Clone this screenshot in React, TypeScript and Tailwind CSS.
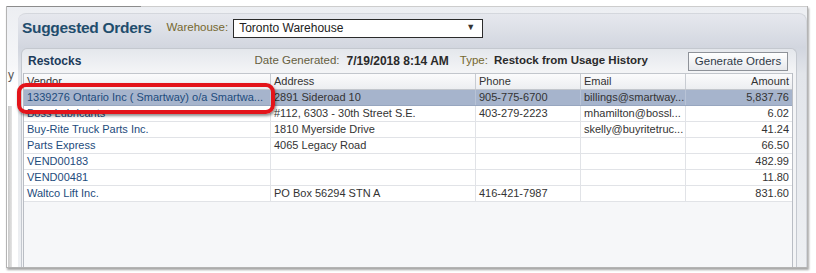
import React from "react";

type Row = {
    vendor: string;
    address: string;
    phone: string;
    email: string;
    amount: string;
    selected?: boolean;
};

const rows: Row[] = [
    { vendor: "1339276 Ontario Inc ( Smartway) o/a Smartwa...", address: "2891 Sideroad 10", phone: "905-775-6700", email: "billings@smartway...", amount: "5,837.76", selected: true },
    { vendor: "Boss Lubricants", address: "#112, 6303 - 30th Street S.E.", phone: "403-279-2223", email: "mhamilton@bossl...", amount: "6.02" },
    { vendor: "Buy-Rite Truck Parts Inc.", address: "1810 Myerside Drive", phone: "", email: "skelly@buyritetruc...", amount: "41.24" },
    { vendor: "Parts Express", address: "4065 Legacy Road", phone: "", email: "", amount: "66.50" },
    { vendor: "VEND00183", address: "", phone: "", email: "", amount: "482.99" },
    { vendor: "VEND00481", address: "", phone: "", email: "", amount: "11.80" },
    { vendor: "Waltco Lift Inc.", address: "PO Box 56294 STN A", phone: "416-421-7987", email: "", amount: "831.60" },
];

const cols = "grid grid-cols-[247px_205px_105px_105px_106px]";

export default function App() {
    return (
        <div className="relative w-[816px] h-[273px] bg-white overflow-hidden font-['Liberation_Sans',Arial,sans-serif]">
            {/* screenshot frame */}
            <div className="ml-[6px] mt-[6px] w-[802px] h-[262px] flex flex-col border-l border-r border-b border-[#b4b4b4] shadow-[1px_2px_2px_rgba(0,0,0,0.35)] bg-[linear-gradient(to_bottom,#eceef2_0px,#f6f7f9_60px,#ffffff_80px)]">
                <div className="h-px bg-[linear-gradient(to_right,#8c8c8c_134px,#cdcdcd_134px)]" />
                <div className="flex flex-1 min-h-0">
                    {/* left gutter */}
                    <div className="w-[13px] flex flex-col">
                        <div className="mt-[61px] ml-[1px] text-[12px] leading-[14px] text-[#555]">y</div>
                        <div className="mt-[24px] ml-[1px] w-[4px] flex-1 bg-[linear-gradient(to_right,#c9c9c9,#e4e4e4)]" />
                    </div>

                    {/* outer panel */}
                    <div className="flex-1 mt-[6px] flex flex-col rounded-t-[8px] border-t border-r border-[#d4d7dd] bg-[linear-gradient(to_bottom,#e6e8ee_0px,#d2d6df_34px,#e2e5ea_60px,#eef0f3_100%)]">
                        <div className="h-[28px] flex items-center pl-[4px]">
                            <span className="text-[15.5px] font-bold tracking-[-0.3px] text-[#1f4d6d]">Suggested Orders</span>
                            <span className="ml-[15px] text-[11.5px] text-[#76682f]">Warehouse:</span>
                            <div className="ml-[5px] w-[250px] h-[19px] flex items-center justify-between border border-[#2b2b2b] bg-white pl-[5px] pr-[7px]">
                                <span className="text-[12px] text-[#222]">Toronto Warehouse</span>
                                <span className="text-[9px] text-[#333]">▼</span>
                            </div>
                        </div>

                        {/* inner panel */}
                        <div className="mt-[6px] ml-[3px] mr-[9px] flex-1 flex flex-col rounded-t-[6px] border-l border-t border-r border-[#c4c8cf] bg-[linear-gradient(to_bottom,#e4e7ec,#f3f4f6_22px)]">
                            <div className="h-[24px] flex items-center pl-[6px] pr-[8px]">
                                <span className="text-[12px] font-bold text-[#1c3b5a]">Restocks</span>
                                <span className="ml-auto text-[11.5px] text-[#66603f]">Date Generated:</span>
                                <span className="ml-[7px] text-[12px] font-bold text-[#2a2a2a]">7/19/2018 8:14 AM</span>
                                <span className="ml-[11px] text-[11.5px] text-[#76682f]">Type:</span>
                                <span className="ml-[6px] text-[11.5px] font-bold text-[#2a2a2a]">Restock from Usage History</span>
                                <button className="ml-[40px] w-[100px] h-[19px] border border-[#8e9299] bg-[linear-gradient(to_bottom,#ffffff,#e6e8ec)] text-[11.5px] text-[#2f3a48]">
                                    Generate Orders
                                </button>
                            </div>

                            {/* table */}
                            <div className="ml-[1px] mr-[3px] flex-1 flex flex-col border-l border-r border-[#b9bdc4] bg-[#f6f7f9]">
                                <div className={`${cols} h-[17px] border-t border-b border-[#c2c6cc] bg-[linear-gradient(to_bottom,#fbfbfc,#eceef1)] text-[11px] text-[#333]`}>
                                    <div className="pl-[3px] leading-[15px] border-r border-[#c8ccd2]">Vendor</div>
                                    <div className="pl-[3px] leading-[15px] border-r border-[#c8ccd2]">Address</div>
                                    <div className="pl-[3px] leading-[15px] border-r border-[#c8ccd2]">Phone</div>
                                    <div className="pl-[3px] leading-[15px] border-r border-[#c8ccd2]">Email</div>
                                    <div className="pr-[3px] leading-[15px] text-right">Amount</div>
                                </div>
                                {rows.map((r) => (
                                    <div
                                        key={r.vendor}
                                        className={`${cols} h-[16px] border-b text-[11px] leading-[15px] ${r.selected ? "bg-[#a6b4cc] border-[#97a6bf]" : "bg-white border-[#e1e3e7]"}`}
                                    >
                                        <div className={`pl-[3px] whitespace-nowrap overflow-hidden border-r text-[#1d4b7c] ${r.selected ? "border-[#b8c3d6]" : "border-[#e1e3e7]"}`}>{r.vendor}</div>
                                        <div className={`pl-[3px] whitespace-nowrap overflow-hidden border-r text-[#333] ${r.selected ? "border-[#b8c3d6]" : "border-[#e1e3e7]"}`}>{r.address}</div>
                                        <div className={`pl-[3px] whitespace-nowrap overflow-hidden border-r text-[#333] ${r.selected ? "border-[#b8c3d6]" : "border-[#e1e3e7]"}`}>{r.phone}</div>
                                        <div className={`pl-[3px] whitespace-nowrap overflow-hidden border-r text-[#333] ${r.selected ? "border-[#b8c3d6]" : "border-[#e1e3e7]"}`}>{r.email}</div>
                                        <div className="pr-[3px] text-right text-[#333]">{r.amount}</div>
                                    </div>
                                ))}
                                <div className="flex-1" />
                            </div>
                        </div>
                    </div>
                </div>
            </div>

            {/* red annotation */}
            <div className="absolute left-[17px] top-[83px] w-[258px] h-[31px] rounded-[9px] border-[4px] border-[#e3141a] shadow-[1px_2px_3px_rgba(0,0,0,0.45)]" />
        </div>
    );
}
